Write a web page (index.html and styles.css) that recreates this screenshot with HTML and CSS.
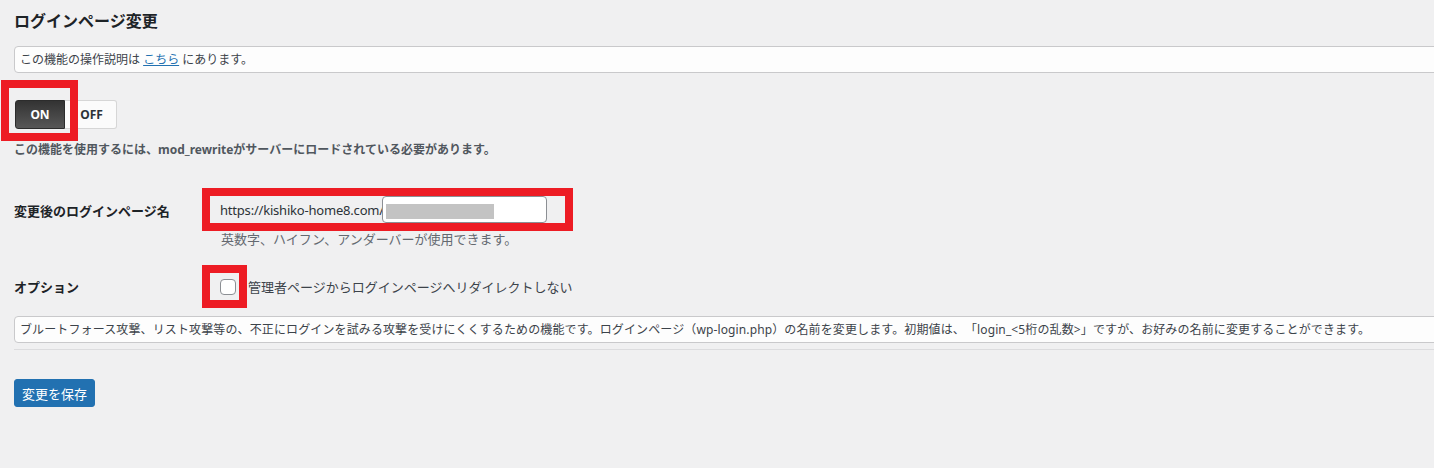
FILE: index.html
```html
<!DOCTYPE html>
<html lang="ja">
<head>
    <meta charset="UTF-8">
    <meta name="viewport" content="width=device-width, initial-scale=1.0">
    <title>ログインページ変更</title>
    <link rel="stylesheet" href="styles.css">
</head>
<body>
<div class="wrap">
    <h2 class="title">ログインページ変更</h2>

    <div class="notice">この機能の操作説明は <a href="#">こちら</a> にあります。</div>

    <div class="toggle">
        <button class="toggle-btn on">ON</button>
        <button class="toggle-btn off">OFF</button>
        <span class="mark mark-toggle"></span>
    </div>
    <p class="note">この機能を使用するには、mod_rewriteがサーバーにロードされている必要があります。</p>

    <div class="row row-url">
        <div class="label">変更後のログインページ名</div>
        <div class="field">
            <div class="url-line">
                <span class="url-prefix">https://kishiko-home8.com/</span>
                <div class="url-input"><span class="redact"></span></div>
            </div>
            <div class="hint">英数字、ハイフン、アンダーバーが使用できます。</div>
        </div>
    </div>

    <div class="row row-option">
        <div class="label">オプション</div>
        <div class="field check-line">
            <span class="check-box"><input type="checkbox"></span>
            <span class="check-label">管理者ページからログインページへリダイレクトしない</span>
        </div>
    </div>

    <div class="notice desc">ブルートフォース攻撃、リスト攻撃等の、不正にログインを試みる攻撃を受けにくくするための機能です。ログインページ（wp-login.php）の名前を変更します。初期値は、「login_&lt;5桁の乱数&gt;」ですが、お好みの名前に変更することができます。</div>

    <hr class="sep">

    <button class="save">変更を保存</button>
</div>
</body>
</html>
```

FILE: styles.css
```css
html {
    overflow: hidden;
}

body {
    margin: 0;
    background-color: #f0f0f1;
    font-family: "Noto Sans", "Noto Sans CJK JP", sans-serif;
    color: #3c434a;
    font-size: 13px;
    text-spacing-trim: space-all;
}

.wrap {
    padding-left: 14px;
    margin-right: -30px;
}

.title {
    margin: 11px 0 0;
    font-size: 16px;
    line-height: 20px;
    font-weight: bold;
    color: #1d2327;
}

.notice {
    margin-top: 15px;
    background-color: #fdfdfd;
    border: 1px solid #c9c9cb;
    border-radius: 4px;
    padding: 0 5px;
    font-size: 12px;
    line-height: 25px;
    color: #3c434a;
    white-space: nowrap;
}

.notice a {
    color: #2271b1;
}

.toggle {
    position: relative;
    display: flex;
    margin-top: 27px;
    padding-left: 1px;
}

.toggle-btn {
    height: 29px;
    width: 51px;
    font-family: "Noto Sans", sans-serif;
    font-size: 12px;
    font-weight: bold;
    border: 1px solid #d6d6d6;
    padding: 0;
}

.toggle-btn.on {
    width: 50px;
    color: #fff;
    border-color: #2c2c2c;
    border-radius: 3px 0 0 3px;
    background: linear-gradient(#333, #575757);
}

.toggle-btn.off {
    width: 52px;
    padding-left: 2px;
    color: #2c3338;
    border-left: none;
    border-radius: 0 3px 3px 0;
    background: #fbfbfb;
}

.mark {
    position: absolute;
    border: 8px solid #ed1c24;
}

.mark-toggle {
    left: -13px;
    top: -20px;
    width: 61px;
    height: 45px;
}

.note {
    margin: 12px 0 0;
    font-size: 12px;
    line-height: 18px;
    font-weight: bold;
    color: #50575e;
}

.row {
    display: flex;
}

.label {
    width: 196px;
    font-weight: bold;
    color: #1d2327;
    font-size: 13px;
}

.row-url {
    margin-top: 37px;
}

.row-url .label {
    line-height: 30px;
}

.url-line {
    display: flex;
    align-items: center;
    width: 345px;
    height: 27px;
    padding-left: 10px;
    outline: 8px solid #ed1c24;
}

.url-prefix {
    width: 162px;
    color: #2c3338;
    font-size: 13px;
    letter-spacing: -0.2px;
    white-space: nowrap;
}

.url-input {
    display: flex;
    align-items: center;
    box-sizing: border-box;
    width: 165px;
    height: 27px;
    padding: 3px 0 0 3px;
    background: #fff;
    border: 1px solid #8c8f94;
    border-radius: 4px;
}

.redact {
    width: 108px;
    height: 15px;
    background: #c3c3c3;
}

.hint {
    margin: 7px 0 0 11px;
    line-height: 18px;
    color: #646970;
}

.row-option {
    margin-top: 25px;
    align-items: center;
    height: 27px;
}

.check-line {
    display: flex;
    align-items: center;
}

.check-box {
    display: flex;
    align-items: center;
    width: 29px;
    height: 27px;
    outline: 8px solid #ed1c24;
}

.check-box input {
    appearance: none;
    box-sizing: border-box;
    width: 16px;
    height: 16px;
    margin: 0 0 0 10px;
    background: #fff;
    border: 1px solid #8c8f94;
    border-radius: 4px;
}

.check-label {
    margin-left: 9px;
    line-height: 20px;
}

.desc {
    margin-top: 16px;
    letter-spacing: 0.12px;
}

.sep {
    margin: 6px 0 0;
    border: none;
    border-top: 1px solid #dcdcde;
}

.save {
    margin-top: 29px;
    height: 28px;
    padding: 0 7px;
    background: #2271b1;
    border: 1px solid #2271b1;
    border-radius: 3px;
    color: #fff;
    font-family: "Noto Sans CJK JP", sans-serif;
    font-size: 13px;
}
```
